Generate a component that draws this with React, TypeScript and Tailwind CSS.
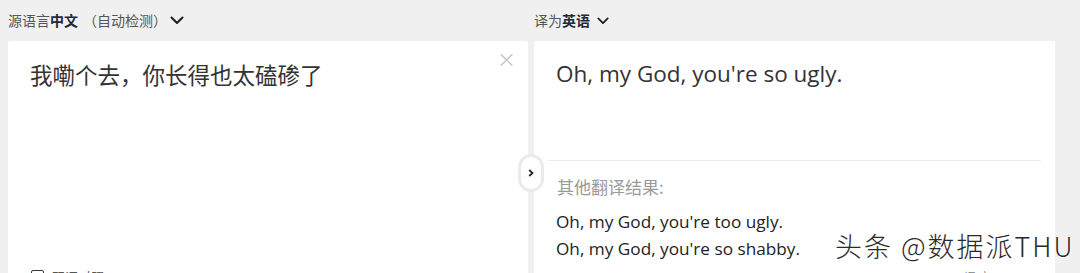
import React from "react";

const cjk = { fontFamily: '"Noto Sans CJK SC", "Noto Sans", sans-serif' };
const en = { fontFamily: '"Open Sans", "Noto Sans CJK SC", sans-serif' };

function Chevron({ className }: { className?: string }) {
  return (
    <svg viewBox="0 0 14 9" className={className} fill="none">
      <path d="M1.5 1.5 L7 7 L12.5 1.5" stroke="#1c1c1c" strokeWidth="2" strokeLinecap="round" strokeLinejoin="round" />
    </svg>
  );
}

export default function App() {
  return (
    <div className="relative w-[1080px] h-[273px] overflow-hidden bg-[#f0f0f0]" style={cjk}>
      <div className="flex pl-2 gap-[6px]">
        {/* Left column */}
        <div className="w-[520px] flex flex-col">
          <div className="h-[41px] flex items-center text-[14px] text-[#555]">
            <span>源语言</span>
            <span className="font-bold text-[#1b2b3c]">中文</span>
            <span className="ml-[5px]">（自动检测）</span>
            <Chevron className="w-[14px] h-[9px] ml-[3px]" />
          </div>
          <div className="relative h-[232px] bg-white rounded-t-[2px]">
            <div className="absolute right-[12px] top-[8px] text-[19px] leading-none text-[#c4c4c4]">×</div>
            <div className="pl-[22px] pt-[18px] text-[22.5px] leading-[30px] text-[#333]">
              我嘞个去，你长得也太磕碜了
            </div>
            <div className="absolute left-[23px] top-[226px] flex items-center gap-[8px] text-[13px] text-[#555]">
              <span className="w-[13px] h-[13px] border-[1.5px] border-[#2a3a4a] rounded-[2px]" />
              <span>双语对照</span>
            </div>
          </div>
        </div>
        {/* Right column */}
        <div className="w-[521px] flex flex-col">
          <div className="h-[41px] flex items-center text-[14px] text-[#555]">
            <span>译为</span>
            <span className="font-bold text-[#1b2b3c]">英语</span>
            <Chevron className="w-[12px] h-[8px] ml-[7px]" />
          </div>
          <div className="relative h-[232px] bg-white rounded-t-[2px]">
            <div className="pl-[22px] pt-[17px] text-[22.5px] leading-[32px] text-[#333]" style={en}>
              Oh, my God, you're so ugly.
            </div>
            <div className="mt-[70px] mx-[14px] h-px bg-[#ececec]" />
            <div className="pl-[23px] pt-[14px] text-[17px] leading-[24px] text-[#9a9a9a]">其他翻译结果:</div>
            <div className="pl-[22px] pt-[9px] text-[17.2px] leading-[27px] text-[#222]" style={en}>
              <div>Oh, my God, you're too ugly.</div>
              <div>Oh, my God, you're so shabby.</div>
            </div>
            <div className="absolute left-[430px] top-[227px] text-[12px] text-[#888]">译 文 ·</div>
          </div>
        </div>
      </div>
      {/* Swap button */}
      <div className="absolute left-[518px] top-[154px] w-[26px] h-[38px] rounded-full bg-white border-[3px] border-[#ebebeb] flex items-center justify-center">
        <svg viewBox="0 0 6 8" className="w-[6px] h-[8px]">
          <path d="M1.2 1 L4.5 4 L1.2 7" stroke="#1b2b3c" strokeWidth="1.8" fill="none" />
        </svg>
      </div>
      {/* Watermark */}
      <div
        className="absolute left-[835px] top-[229px] text-[27px] leading-[34px] text-[#2a2a2a] font-light tracking-[2px] whitespace-nowrap"
        style={{ textShadow: "0 0 2px #fff, 0 0 2px #fff, 1px 1px 1px #fff" }}
      >
        头条 @数据派THU
      </div>
    </div>
  );
}
